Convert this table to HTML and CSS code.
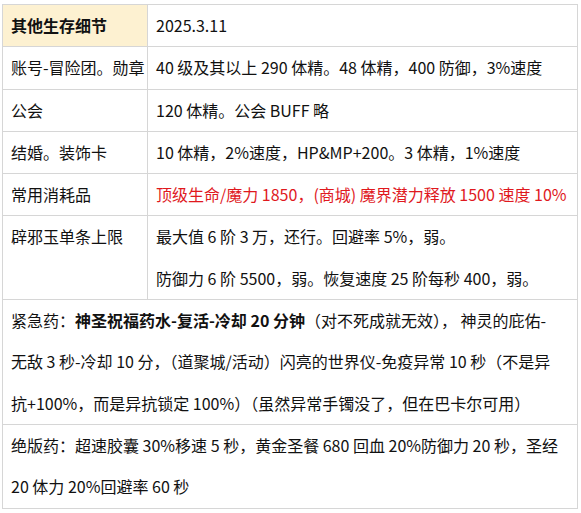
FILE: index.html
```html
<!DOCTYPE html>
<html lang="zh-CN">
<head>
<meta charset="utf-8">
<link rel="stylesheet" href="styles.css">
</head>
<body>
<table class="tbl">
  <colgroup><col class="c1"><col class="c2"></colgroup>
  <tr>
    <td class="head"><b>其他生存细节</b></td>
    <td>2025.3.11</td>
  </tr>
  <tr>
    <td>账号-冒险团。勋章</td>
    <td>40 级及其以上 290 体精。48 体精，400 防御，3%速度</td>
  </tr>
  <tr>
    <td>公会</td>
    <td>120 体精。公会 BUFF 略</td>
  </tr>
  <tr>
    <td>结婚。装饰卡</td>
    <td>10 体精，2%速度，HP&amp;MP+200。3 体精，1%速度</td>
  </tr>
  <tr>
    <td>常用消耗品</td>
    <td class="red">顶级生命/魔力 1850，(商城) 魔界潜力释放 1500 速度 10%</td>
  </tr>
  <tr>
    <td>辟邪玉单条上限</td>
    <td>最大值 6 阶 3 万，还行。回避率 5%，弱。<br>防御力 6 阶 5500，弱。恢复速度 25 阶每秒 400，弱。</td>
  </tr>
  <tr>
    <td colspan="2">紧急药：<b>神圣祝福药水-复活-冷却 20 分钟</b>（对不死成就无效）， 神灵的庇佑-<br>无敌 3 秒-冷却 10 分，（道聚城/活动）闪亮的世界仪-免疫异常 10 秒（不是异<br>抗+100%，而是异抗锁定 100%）（虽然异常手镯没了，但在巴卡尔可用）</td>
  </tr>
  <tr>
    <td colspan="2">绝版药：超速胶囊 30%移速 5 秒，黄金圣餐 680 回血 20%防御力 20 秒，圣经<br>20 体力 20%回避率 60 秒</td>
  </tr>
</table>
</body>
</html>
```
FILE: styles.css
```css
html, body {
  margin: 0;
  padding: 0;
  background: #fff;
}
body {
  padding: 4px 0 0 2px;
  font-family: "Noto Sans CJK SC", "Noto Sans", sans-serif;
  font-size: 16px;
  color: #111;
}
.tbl {
  border-collapse: collapse;
  width: 576px;
  table-layout: fixed;
}
.c1 { width: 145px; }
.tbl td {
  border: 1px solid #d6d6d6;
  padding: 0 2px 0 8px;
  line-height: 41.3px;
  vertical-align: top;
  white-space: nowrap;
}
.tbl td.head {
  background: #fdf1d1;
}
.red {
  color: #e0191e;
}
b { font-weight: 700; }
```
